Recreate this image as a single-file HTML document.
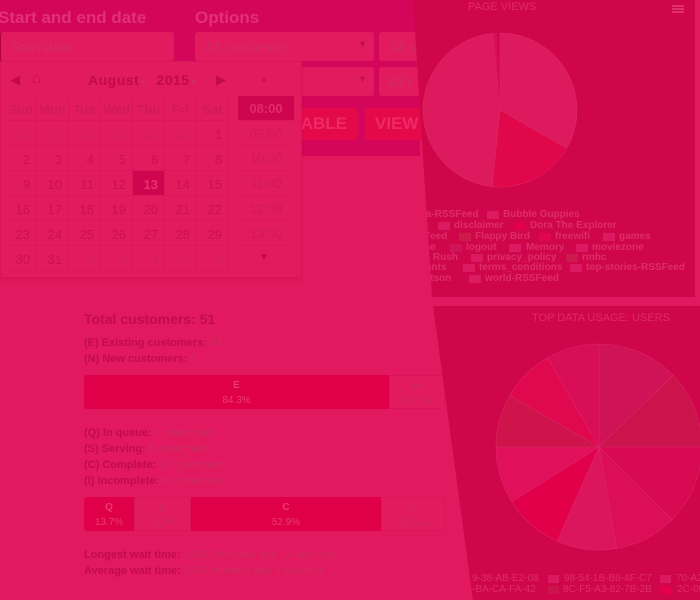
<!DOCTYPE html>
<html><head><style>
*{margin:0;padding:0;box-sizing:border-box}
body{width:700px;height:600px;overflow:hidden;background:#e2195e;font-family:"Liberation Sans",sans-serif;position:relative}
.a{position:absolute;white-space:nowrap}
.form{position:absolute;left:0;top:0;width:420px;height:156px;background:#d3065a}
.h{font-weight:bold;font-size:17px;color:#e2307a;top:8px}
.inp{position:absolute;background:#e21a5e;border-radius:3px;height:29px;font-size:14px;color:#cf2c64;padding:7px 0 0 10px}
.btn{position:absolute;background:#e40a4a;border-radius:3px;height:32px;font-weight:bold;font-size:17px;color:#ee2a66;padding:6px 0 0 6px}
.cal{position:absolute;left:0;top:61px;width:302px;height:217px;background:#e21a5e;border:1px solid #d9155a;box-shadow:0 2px 3px rgba(180,0,60,.2)}
.cal .c{position:absolute;width:32px;height:25px;font-size:13px;color:#cc1052;text-align:right;padding:6px 6px 0 0;border-right:1px solid #dc1659;border-bottom:1px solid #dc1659}
.cal .o{color:#d41e5c}
.t{position:absolute;left:237px;width:56px;height:25px;font-size:13px;text-align:center;color:#cf1a56;padding-top:5px;border-bottom:1px solid #dc1659}
.st{font-size:11px;color:#c20b4c;font-weight:bold}
.st span{font-weight:normal;color:#cc2c62}
.bar{position:absolute;height:34px;font-size:10px;text-align:center;line-height:15px;padding-top:3px}
.lg{font-size:10px;font-weight:bold;color:#de2c6a}
.sw{position:absolute;width:12px;height:8px;background:#dc1a62}
.l2{font-size:10px;color:#de2c6a}
</style></head><body>
<div class="form"></div>
<div class="a h" style="left:-2px">Start and end date</div>
<div class="a h" style="left:195px">Options</div>
<div class="inp" style="left:0;top:32px;width:174px;color:#d42e66;border-left:1px solid #b00040">Start date</div>
<div class="inp" style="left:195px;top:32px;width:179px">All customers<span style="position:absolute;right:7px;top:7px;font-size:9px;color:#c0104a">▼</span></div>
<div class="inp" style="left:379px;top:32px;width:50px">All s</div>
<div class="inp" style="left:195px;top:67px;width:179px"><span style="position:absolute;right:7px;top:7px;font-size:9px;color:#c0104a">▼</span></div>
<div class="inp" style="left:379px;top:67px;width:50px">All r</div>
<div class="btn" style="left:290px;top:108px;width:68px">&nbsp;ABLE</div>
<div class="btn" style="left:365px;top:108px;width:60px;padding-left:10px">VIEW</div>

<div class="cal">
<div class="a" style="left:9px;top:10px;font-size:13px;color:#c40a4c">◀</div>
<div class="a" style="left:31px;top:8px;font-size:15px;color:#c40a4c">⌂</div>
<div class="a" style="left:87px;top:10px;font-size:14px;font-weight:bold;color:#c20a4a;letter-spacing:.5px">August<span style="font-size:8px;color:#d03068">▼</span>&nbsp; 2015<span style="font-size:8px;color:#d03068">▼</span></div>
<div class="a" style="left:215px;top:10px;font-size:13px;color:#c40a4c">▶</div>
<div class="a" style="left:258px;top:12px;font-size:10px;color:#cc1052">▲</div>
<div class="a" style="left:258px;top:190px;font-size:10px;color:#c40a4c">▼</div>
<div id="g"></div>
<div class="t" style="top:34px;background:#d0054f;color:#e02c6a;font-weight:bold">08:00</div>
<div class="t" style="top:59px">09:00</div>
<div class="t" style="top:84px">10:00</div>
<div class="t" style="top:109px">11:00</div>
<div class="t" style="top:134px">12:00</div>
<div class="t" style="top:159px">13:00</div>
</div>

<div class="a" style="left:84px;top:311px;font-size:14px;font-weight:bold;color:#c20b4c">Total customers: 51</div>
<div class="a st" style="left:84px;top:337px">(E) Existing customers: <span>43</span></div>
<div class="a st" style="left:84px;top:353px">(N) New customers: <span>8</span></div>
<div class="bar" style="left:84px;top:375px;width:305px;background:#e0004a;color:#ea3a70;border-radius:3px 0 0 3px"><b>E</b><br>84.3%</div>
<div class="bar" style="left:389px;top:375px;width:56px;background:#e21a5e;color:#cc2a60;border:1px solid #d8165a;border-radius:0 3px 3px 0"><b>N</b><br>15.7%</div>
<div class="a st" style="left:84px;top:427px">(Q) In queue: <span>7 customers</span></div>
<div class="a st" style="left:84px;top:443px">(S) Serving: <span>8 customers</span></div>
<div class="a st" style="left:84px;top:459px">(C) Complete: <span>27 customers</span></div>
<div class="a st" style="left:84px;top:475px">(I) Incomplete: <span>9 customers</span></div>
<div class="bar" style="left:84px;top:497px;width:50px;background:#e0004a;color:#ea3a70;border-radius:3px 0 0 3px"><b>Q</b><br>13.7%</div>
<div class="bar" style="left:134px;top:497px;width:57px;background:#e21a5e;color:#cc2a60;border:1px solid #d8165a"><b>S</b><br>15.7%</div>
<div class="bar" style="left:191px;top:497px;width:190px;background:#e0004a;color:#ea3a70"><b>C</b><br>52.9%</div>
<div class="bar" style="left:381px;top:497px;width:64px;background:#e21a5e;color:#cc2a60;border:1px solid #d8165a;border-radius:0 3px 3px 0"><b>I</b><br>17.6%</div>
<div class="a st" style="left:84px;top:549px">Longest wait time: <span>12657 minutes and 16 seconds</span></div>
<div class="a st" style="left:84px;top:565px">Average wait time: <span>2385 minutes and 3 seconds</span></div>

<div style="position:absolute;left:0;top:0;width:700px;height:600px;clip-path:polygon(413px 0,695px 0,695px 297px,432px 297px)">
<div style="position:absolute;inset:0;background:#d0064b"></div>
<div class="a" style="left:468px;top:1px;font-size:11px;color:#e02a6a">PAGE VIEWS</div>
<div class="a" style="left:672px;top:5px;width:12px;height:2px;background:#e0306a;box-shadow:0 3px 0 #e0306a,0 6px 0 #e0306a"></div>
<svg class="a" style="left:0;top:0" width="700" height="300">
<path d="M500 110 L500 33 A77 77 0 0 1 566.7 148.5Z" fill="#de1a5e" stroke="#e02a68" stroke-width=".5"/>
<path d="M500 110 L566.7 148.5 A77 77 0 0 1 492 186.6Z" fill="#e0074a" stroke="#e02a68" stroke-width=".5"/>
<path d="M500 110 L492 186.6 A77 77 0 0 1 493.3 33.3Z" fill="#de1a5e" stroke="#e02a68" stroke-width=".5"/>
<path d="M500 110 L493.3 33.3 A77 77 0 0 1 497.3 33Z" fill="#d80e56"/>
</svg>
<div class="a lg" style="left:423px;top:209px">ia-RSSFeed</div><div class="sw" style="left:487px;top:211px"></div><div class="a lg" style="left:503px;top:209px">Bubble Guppies</div>
<div class="sw" style="left:438px;top:222px"></div><div class="a lg" style="left:454px;top:220px">disclaimer</div><div class="sw" style="left:514px;top:222px;background:#e2004a"></div><div class="a lg" style="left:530px;top:220px">Dora The Explorer</div>
<div class="a lg" style="left:424px;top:231px">Feed</div><div class="sw" style="left:459px;top:233px;background:#cc1a4a"></div><div class="a lg" style="left:475px;top:231px">Flappy Bird</div><div class="sw" style="left:539px;top:233px;background:#e2064e"></div><div class="a lg" style="left:555px;top:231px">freewifi</div><div class="sw" style="left:603px;top:233px"></div><div class="a lg" style="left:619px;top:231px">games</div>
<div class="a lg" style="left:424px;top:242px">ne</div><div class="sw" style="left:450px;top:244px;background:#d01458"></div><div class="a lg" style="left:466px;top:242px">logout</div><div class="sw" style="left:509px;top:244px"></div><div class="a lg" style="left:526px;top:242px">Memory</div><div class="sw" style="left:576px;top:244px"></div><div class="a lg" style="left:592px;top:242px">moviezone</div>
<div class="a lg" style="left:424px;top:252px">o Rush</div><div class="sw" style="left:471px;top:254px"></div><div class="a lg" style="left:487px;top:252px">privacy_policy</div><div class="sw" style="left:566px;top:254px;background:#cc1a4c"></div><div class="a lg" style="left:582px;top:252px">rmhc</div>
<div class="a lg" style="left:426px;top:262px">ants</div><div class="sw" style="left:463px;top:264px"></div><div class="a lg" style="left:479px;top:262px">terms_conditions</div><div class="sw" style="left:570px;top:264px"></div><div class="a lg" style="left:586px;top:262px">top-stories-RSSFeed</div>
<div class="a lg" style="left:424px;top:273px">otson</div><div class="sw" style="left:469px;top:275px"></div><div class="a lg" style="left:485px;top:273px">world-RSSFeed</div>
</div>

<div style="position:absolute;left:0;top:0;width:700px;height:600px;clip-path:polygon(433px 306px,700px 306px,700px 600px,473px 600px)">
<div style="position:absolute;inset:0;background:#d0064b"></div>
<div class="a" style="left:532px;top:312px;font-size:11px;color:#de2a68">TOP DATA USAGE: USERS</div>
<svg class="a" style="left:0;top:0" width="700" height="600">
<g stroke="#de2466" stroke-width=".6">
<path d="M599 447L599 344A103 103 0 0 1 673.1 375.4Z" fill="#d01256"/>
<path d="M599 447L673.1 375.4A103 103 0 0 1 702 447Z" fill="#cc144c"/>
<path d="M599 447L702 447A103 103 0 0 1 671.8 519.8Z" fill="#d80a52"/>
<path d="M599 447L671.8 519.8A103 103 0 0 1 616.9 548.4Z" fill="#dc0e55"/>
<path d="M599 447L616.9 548.4A103 103 0 0 1 557.1 541.1Z" fill="#dc165c"/>
<path d="M599 447L557.1 541.1A103 103 0 0 1 511.7 501.6Z" fill="#e2004a"/>
<path d="M599 447L511.7 501.6A103 103 0 0 1 496 447Z" fill="#e0105a"/>
<path d="M599 447L496 447A103 103 0 0 1 509.8 395.5Z" fill="#ce144a"/>
<path d="M599 447L509.8 395.5A103 103 0 0 1 547.5 357.8Z" fill="#e0084e"/>
<path d="M599 447L547.5 357.8A103 103 0 0 1 599 344Z" fill="#d80e56"/>
</g></svg>
<div class="a l2" style="left:472px;top:573px">9-38-AB-E2-08</div><div class="sw" style="left:548px;top:575px;width:11px"></div><div class="a l2" style="left:564px;top:573px">98-54-1B-B6-4F-C7</div><div class="sw" style="left:660px;top:575px;width:11px"></div><div class="a l2" style="left:676px;top:573px">70-A2</div>
<div class="a l2" style="left:472px;top:584px">-BA-CA-FA-42</div><div class="sw" style="left:548px;top:586px;width:11px;background:#cc144c"></div><div class="a l2" style="left:563px;top:584px">8C-F5-A3-82-7B-2B</div><div class="sw" style="left:660px;top:586px;width:11px;background:#e2004a"></div><div class="a l2" style="left:677px;top:584px">2C-0E</div>
</div>

<script>
var g=document.getElementById('g'),h='';
var hd=['Sun','Mon','Tue','Wed','Thu','Fri','Sat'];
for(var i=0;i<7;i++)h+='<div class="c" style="left:'+(4+i*32)+'px;top:34px;text-align:center;padding-right:0;font-weight:bold;color:#d01a58">'+hd[i]+'</div>';
var d=[26,27,28,29,30,31];for(var k=1;k<=31;k++)d.push(k);for(k=1;d.length<42;k++)d.push(k);
for(var j=0;j<42;j++){var r=Math.floor(j/7),c=j%7,o=(j<6||j>36),s=(d[j]==13&&!o);
h+='<div class="c'+(o?' o':'')+'" style="left:'+(4+c*32)+'px;top:'+(59+r*25)+'px;'+(s?'background:#d0054f;color:#e8306c;font-weight:bold;':'')+'">'+d[j]+'</div>';}
g.innerHTML=h;
</script>
</body></html>
